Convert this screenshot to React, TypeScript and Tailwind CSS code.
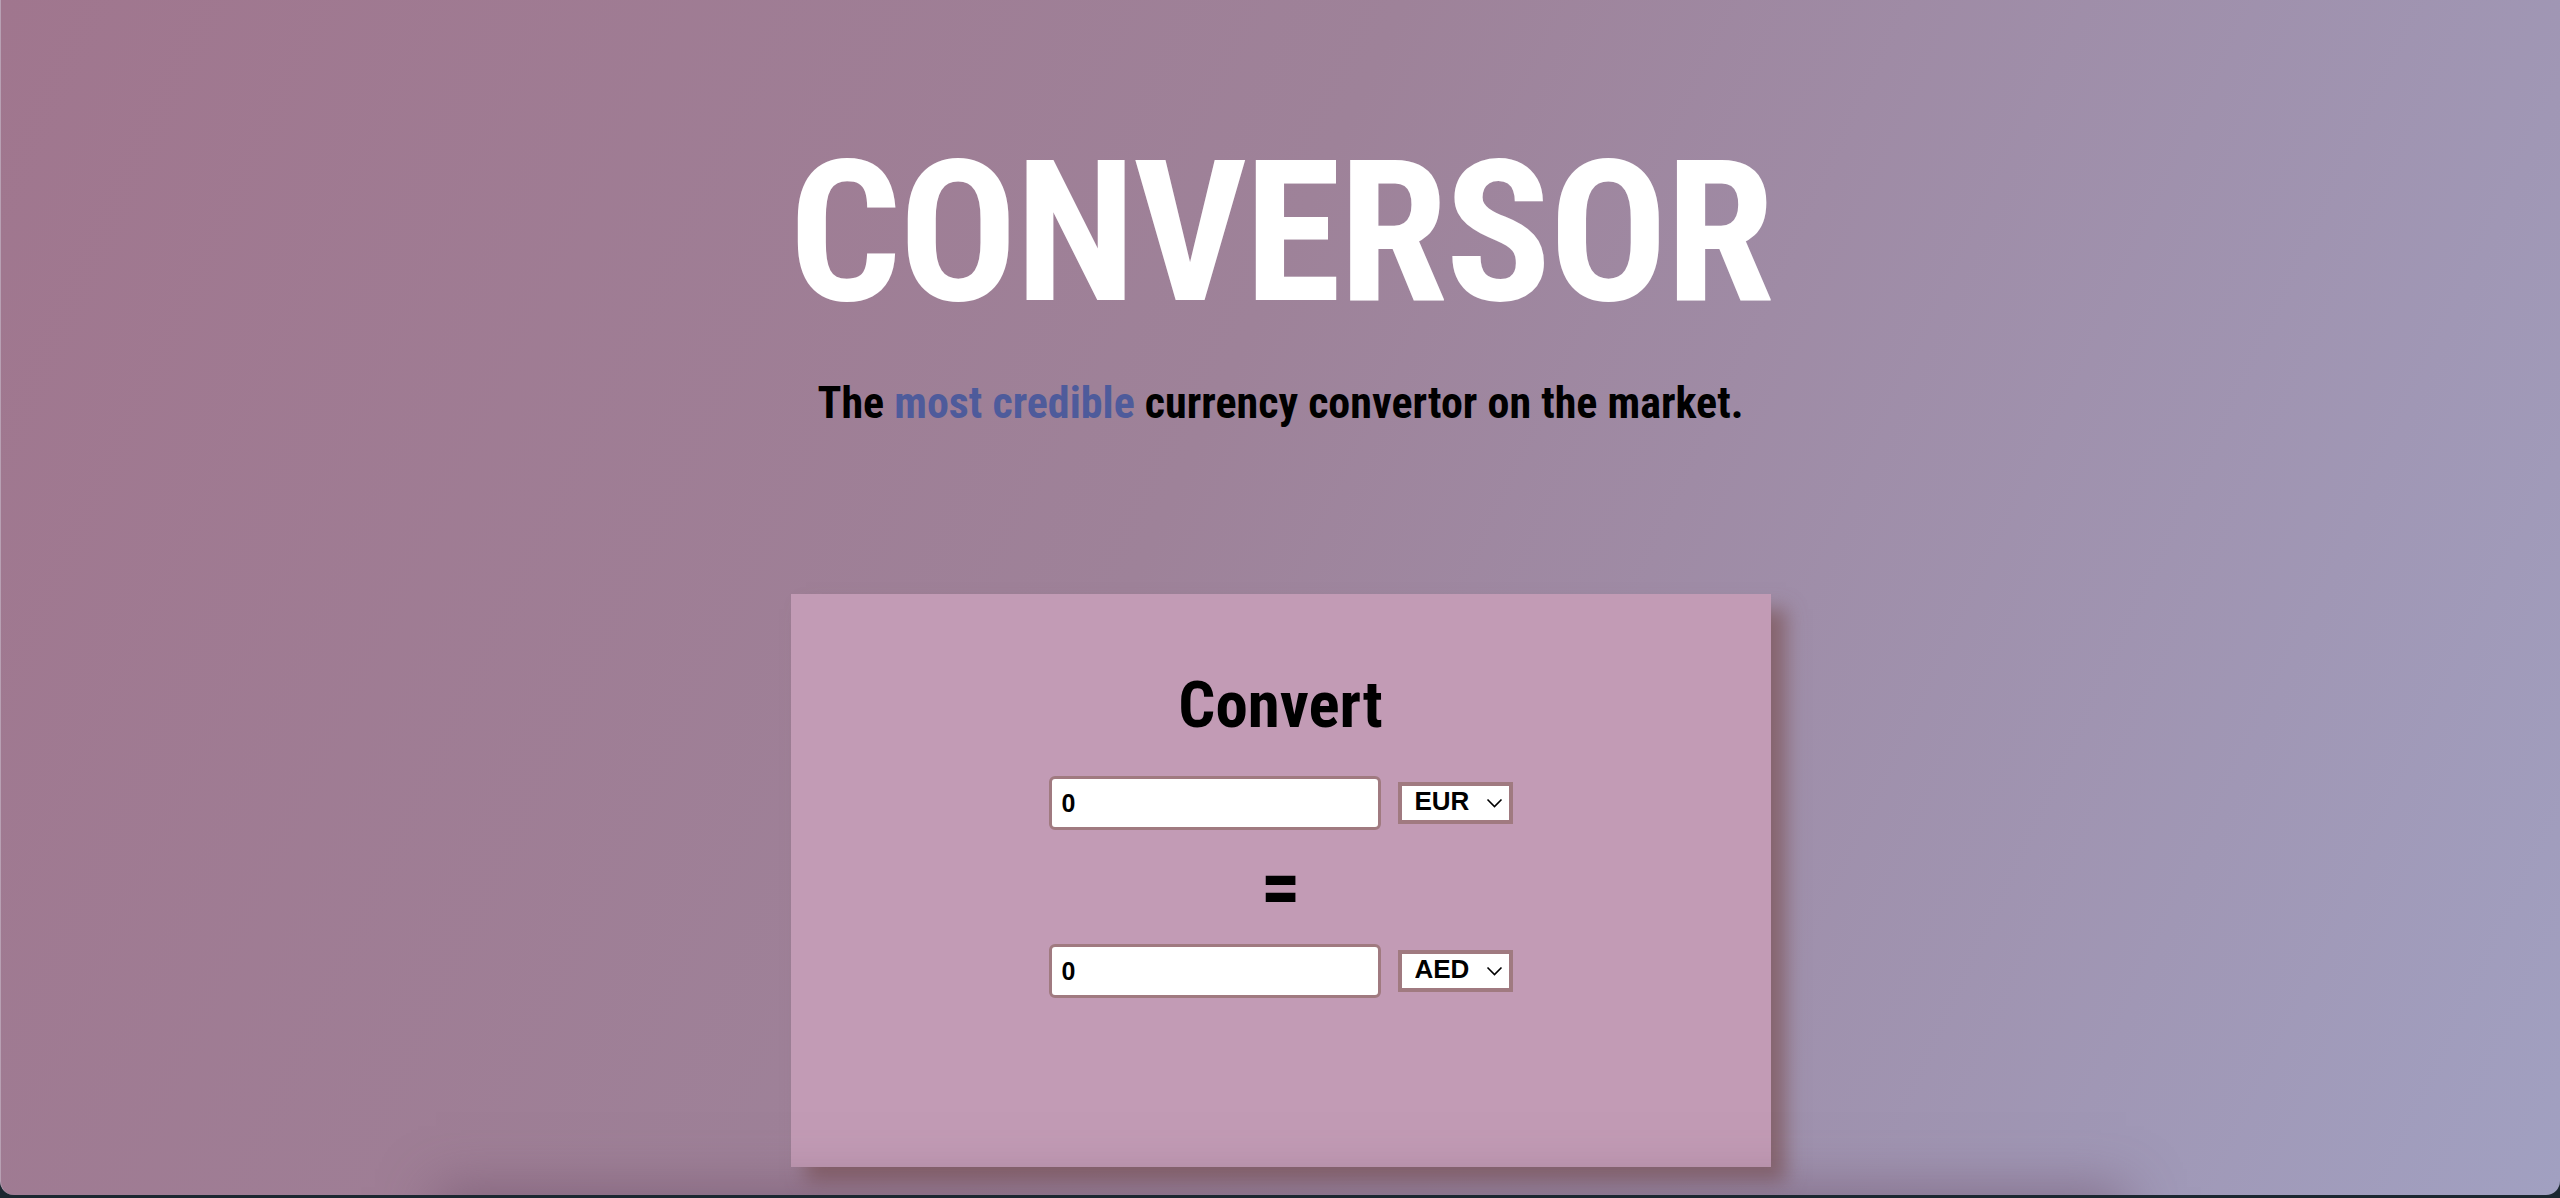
import React, { useState } from 'react';

const currencies = ['EUR', 'AED', 'USD', 'GBP', 'JPY'];

const CurrencyRow = ({ value, currency }: { value: string; currency: string }) => {
    const [cur, setCur] = useState(currency);
    return (
        <div className="flex items-center justify-center gap-[17px]">
            <input
                type="text"
                defaultValue={value}
                className="w-[332px] h-[54px] bg-white border-[3px] border-[#a07a80] rounded-[6px] pl-[10px] text-[25px] font-bold text-black outline-none font-['Liberation_Sans',Arial,sans-serif]"
            />
            <div className="relative">
                <select
                    value={cur}
                    onChange={(e) => setCur(e.target.value)}
                    className="appearance-none w-[115px] h-[42px] bg-white border-[4px] border-[#a07a80] pl-[13px] pb-[4px] text-[26px] leading-none font-bold text-black outline-none font-['Liberation_Sans',Arial,sans-serif]"
                >
                    {currencies.map((c) => (
                        <option key={c} value={c}>
                            {c}
                        </option>
                    ))}
                </select>
                {/* chevron */}
                <svg
                    className="pointer-events-none absolute right-[10px] top-1/2 -translate-y-1/2 w-[17px] h-[10px]"
                    viewBox="0 0 17 10"
                    fill="none"
                    stroke="black"
                    strokeWidth="1.6"
                >
                    <path d="M1.5 1.5 L8.5 8.5 L15.5 1.5" />
                </svg>
            </div>
        </div>
    );
};

const App = () => {
    return (
        <div className="w-full h-[1198px] bg-[#1b2730] overflow-hidden">
            <div className="relative h-[1195px] rounded-b-[14px] overflow-hidden border-l border-[#b7a0b3] bg-[linear-gradient(115deg,#a0768e_0%,#9e8299_45%,#a1a0c1_100%)] flex flex-col items-center font-['Roboto_Condensed','Roboto',sans-serif]">
                <h1 className="mt-[134px] text-[197px] leading-none font-bold text-white tracking-[-2.5px]">CONVERSOR</h1>
                <p className="mt-[50px] text-[44px] leading-none font-bold text-black">
                    The <span className="text-[#4e5b9b]">most credible</span> currency convertor on the market.
                </p>

                {/* Converter card */}
                <div className="mt-[169px] w-[980px] h-[573px] shrink-0 bg-[#c29bb5] shadow-[15px_15px_18px_rgba(125,85,90,0.75)] flex flex-col items-center pt-[79px]">
                    <h2 className="text-[65px] leading-none font-bold text-black">Convert</h2>
                    <div className="mt-[38px]">
                        <CurrencyRow value="0" currency="EUR" />
                    </div>
                    <div className="h-[114px] flex items-center justify-center text-[80px] leading-none font-bold text-black">=</div>
                    <CurrencyRow value="0" currency="AED" />
                </div>

                {/* next section peeking below the fold */}
                <div className="mt-[45px] w-[1640px] h-[300px] shrink-0 bg-[#98879f] shadow-[0_0_50px_25px_rgba(105,75,100,0.5)]"></div>
            </div>
        </div>
    );
};

export default App;
